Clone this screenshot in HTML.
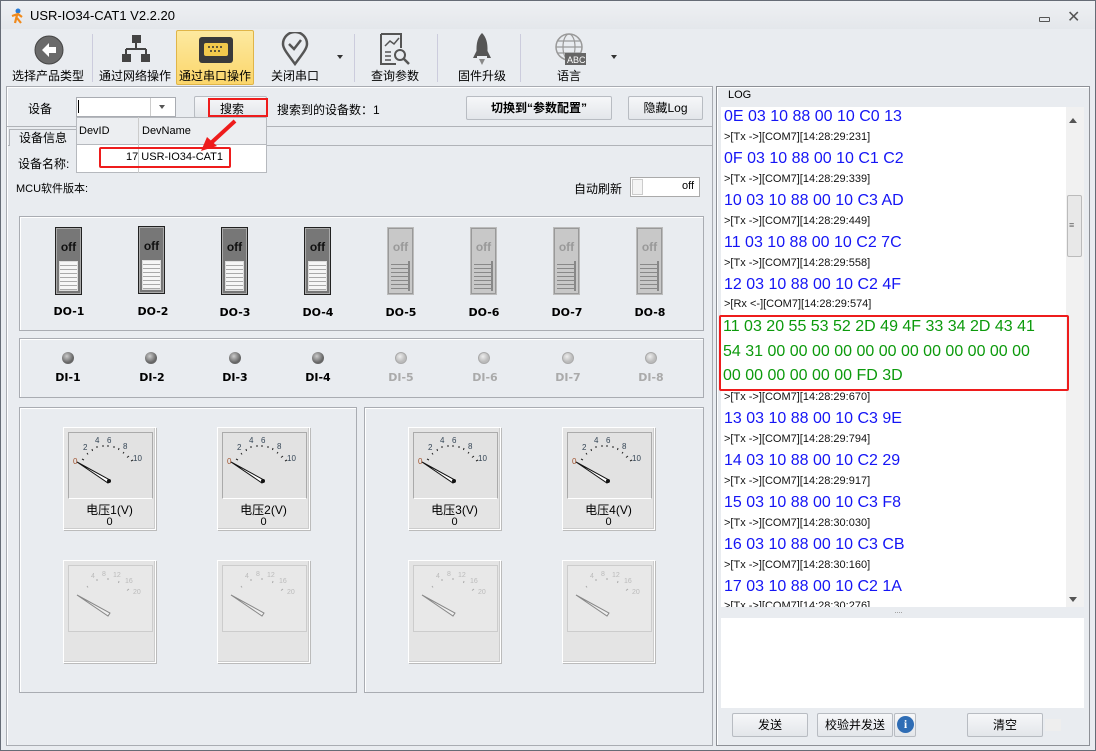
<!DOCTYPE html>
<html><head><meta charset="utf-8">
<style>
*{margin:0;padding:0;box-sizing:border-box}
body{width:1096px;height:751px;background:#e9ecf0;font-family:"Liberation Sans","Noto Sans CJK SC",sans-serif;font-size:12px;color:#000;position:relative;overflow:hidden}
.a{position:absolute}
.win{left:0;top:0;width:1096px;height:751px;border:1px solid #666c76}
.tb{font-size:12px;text-align:center;width:80px}
.btn{position:absolute;background:linear-gradient(#f6f7f9,#e3e6ea);border:1px solid #b8bcc2;border-radius:2px;text-align:center;font-size:12px}
.box{position:absolute;border:1px solid #a9acb2;box-shadow:inset 1px 1px 0 #fff}
.sw{position:absolute;width:27px;height:68px;border:1px solid #222;background:#777;box-shadow:inset 0 0 0 1px #aaa}
.sw b{position:absolute;top:12px;left:0;width:25px;text-align:center;font-size:12px;font-weight:bold;color:#111}
.sw i{position:absolute;left:3px;bottom:3px;width:19px;height:30px;background:repeating-linear-gradient(#f6f6f6 0 3px,#aaa 3px 4px);border:1px solid #ddd}
.sw.d{border:1px solid #bbb;background:#c8c8c8;box-shadow:inset 0 0 0 1px #999}
.sw.d b{color:#999}
.sw.d i{background:repeating-linear-gradient(#c8c8c8 0 3px,#888 3px 4px);border:none;border-right:2px solid #888}
.lbl{position:absolute;width:60px;text-align:center;font-weight:bold;font-family:"DejaVu Sans",sans-serif;font-size:11px}
.led{position:absolute;width:12px;height:12px;border-radius:50%;background:radial-gradient(circle at 40% 35%,#ccc,#666 60%)}
.led.d{background:radial-gradient(circle at 40% 35%,#eee,#bbb 60%);border:1px solid #aaa}
.g{position:absolute;width:93px;height:103px;background:#e4e4e4;border:1px solid #fff;box-shadow:1px 1px 0 #bbb,inset -1px -1px 0 #ccc}
.g .dial{position:absolute;left:4px;top:4px;width:85px;height:67px;background:#e2e2e2;border:1px solid #aaa;border-bottom-color:#fff}
.g .t{position:absolute;top:73px;width:100%;text-align:center;font-size:12px}
.g .v{position:absolute;top:88px;width:100%;text-align:center;font-size:11px}
.hx{position:absolute;left:724px;font-size:16px;color:#1515f5;white-space:nowrap;top:0}
.sm{position:absolute;left:724px;font-size:11px;color:#111;white-space:nowrap}
.gr{position:absolute;left:723px;font-size:16px;color:#0c9a0c;white-space:nowrap}
</style></head><body>
<div class="a win"></div>
<div class="a" style="left:1px;top:1px;width:1094px;height:28px;background:linear-gradient(#eef0f3,#e4e7eb)"></div>
<svg class="a" style="left:9px;top:8px" width="16" height="16"><circle cx="9" cy="3" r="2.5" fill="#2a7bd4"/><path d="M3 8 L9 6 L13 9 M8 7 L6 15 M8 10 L12 15" stroke="#f08a1c" stroke-width="2.2" fill="none"/></svg>
<div class="a" style="left:30px;top:8px;font-size:13px">USR-IO34-CAT1 V2.2.20</div>
<div class="a" style="left:1039px;top:17px;width:11px;height:5px;border:1px solid #555;border-radius:1px"></div>
<div class="a" style="left:1067px;top:7px;font-size:16px;color:#555">✕</div>
<div class="a" style="left:176px;top:30px;width:78px;height:55px;background:linear-gradient(#fde9a0,#fbd66b);border:1px solid #e0b548;border-radius:2px"></div>
<svg class="a" style="left:33px;top:34px" width="32" height="32"><circle cx="16" cy="16" r="14" fill="#6a6a6a" stroke="#444"/><path d="M9 16 L16 9 V13 H23 V19 H16 V23 Z" fill="#fff"/></svg>
<svg class="a" style="left:120px;top:34px" width="32" height="30"><rect x="12" y="1" width="9" height="8" fill="#444"/><path d="M16 9 V15 M6 15 H26 M6 15 V20 M26 15 V20" stroke="#444" stroke-width="2"/><rect x="2" y="20" width="9" height="8" fill="#444"/><rect x="21" y="20" width="9" height="8" fill="#444"/></svg>
<svg class="a" style="left:198px;top:36px" width="36" height="28"><rect x="1" y="1" width="34" height="26" rx="3" fill="#3a3a3a"/><rect x="6" y="7" width="24" height="13" rx="2" fill="#f2c94c"/><g fill="#333"><circle cx="11" cy="11" r="1"/><circle cx="15" cy="11" r="1"/><circle cx="19" cy="11" r="1"/><circle cx="23" cy="11" r="1"/><circle cx="13" cy="15" r="1"/><circle cx="17" cy="15" r="1"/><circle cx="21" cy="15" r="1"/></g></svg>
<svg class="a" style="left:280px;top:32px" width="30" height="34"><path d="M15 32 C6 20 3 16 3 12 A12 12 0 0 1 27 12 C27 16 24 20 15 32Z" fill="none" stroke="#555" stroke-width="2.5"/><path d="M9 12 L14 17 L21 8" stroke="#555" stroke-width="2.5" fill="none"/></svg>
<div class="a" style="left:337px;top:55px;border:3px solid transparent;border-top:4px solid #333"></div>
<svg class="a" style="left:378px;top:32px" width="34" height="34"><path d="M3 2 H23 V16 M3 2 V32 H18" stroke="#555" stroke-width="2" fill="none"/><path d="M7 14 L12 9 L16 12 L21 6" stroke="#555" stroke-width="1.5" fill="none"/><path d="M7 20H13M7 24H13M7 28H13" stroke="#555" stroke-width="1.5"/><circle cx="22" cy="23" r="5" fill="none" stroke="#555" stroke-width="2"/><path d="M26 27 L31 32" stroke="#555" stroke-width="2.5"/></svg>
<svg class="a" style="left:470px;top:32px" width="24" height="34"><path d="M12 1 C18 7 18 16 17 24 H7 C6 16 6 7 12 1Z" fill="#555"/><path d="M7 18 L3 26 H7Z M17 18 L21 26 H17Z" fill="#555"/><path d="M9 27 L12 33 L15 27Z" fill="#888"/></svg>
<svg class="a" style="left:553px;top:32px" width="34" height="34"><circle cx="16" cy="15" r="13" fill="none" stroke="#999" stroke-width="1.5"/><ellipse cx="16" cy="15" rx="6" ry="13" fill="none" stroke="#999" stroke-width="1.2"/><path d="M3 15H29M5 9H27M5 21H27" stroke="#999" stroke-width="1.2"/><rect x="12" y="21" width="21" height="12" fill="#666"/><text x="14" y="31" font-size="9" fill="#fff" font-family="Liberation Sans">ABC</text></svg>
<div class="a" style="left:611px;top:55px;border:3px solid transparent;border-top:4px solid #333"></div>
<div class="a tb" style="left:8px;top:67px">选择产品类型</div>
<div class="a tb" style="left:95px;top:67px">通过网络操作</div>
<div class="a tb" style="left:175px;top:67px">通过串口操作</div>
<div class="a tb" style="left:255px;top:67px">关闭串口</div>
<div class="a tb" style="left:355px;top:67px">查询参数</div>
<div class="a tb" style="left:442px;top:67px">固件升级</div>
<div class="a tb" style="left:529px;top:67px">语言</div>
<div class="a" style="left:92px;top:34px;width:1px;height:48px;background:#ccd"></div>
<div class="a" style="left:354px;top:34px;width:1px;height:48px;background:#ccd"></div>
<div class="a" style="left:437px;top:34px;width:1px;height:48px;background:#ccd"></div>
<div class="a" style="left:520px;top:34px;width:1px;height:48px;background:#ccd"></div>
<div class="box" style="left:6px;top:86px;width:707px;height:660px"></div>
<div class="a" style="left:7px;top:126px;width:705px;height:1px;background:#b0b3b8"></div>
<div class="a" style="left:28px;top:100px;font-size:12px">设备</div>
<div class="a" style="left:76px;top:97px;width:100px;height:20px;background:#fff;border:1px solid #a9acb2"></div>
<div class="a" style="left:78px;top:100px;width:1px;height:13px;background:#000"></div>
<div class="a" style="left:150px;top:98px;width:1px;height:18px;background:#ccc"></div>
<div class="a" style="left:159px;top:105px;border:3px solid transparent;border-top:4px solid #555"></div>
<div class="btn" style="left:194px;top:96px;width:73px;height:22px"></div>
<div class="a" style="left:208px;top:98px;width:60px;height:19px;border:2px solid #ee1c1c"></div>
<div class="a" style="left:220px;top:100px">搜索</div>
<div class="a" style="left:277px;top:101px">搜索到的设备数：1</div>
<div class="btn" style="left:466px;top:96px;width:146px;height:24px;line-height:22px;font-weight:bold">切换到“参数配置”</div>
<div class="btn" style="left:628px;top:96px;width:75px;height:24px;line-height:22px">隐藏Log</div>
<div class="a" style="left:8px;top:128px;width:704px;height:18px;border-bottom:1px solid #b0b3b8"></div>
<div class="a" style="left:9px;top:129px;width:68px;height:17px;border:1px solid #b0b3b8;border-bottom:none;background:#e9ecf0;text-align:center;line-height:16px">设备信息</div>
<div class="a" style="left:18px;top:155px">设备名称:</div>
<div class="a" style="left:16px;top:180px;font-size:11px">MCU软件版本:</div>
<div class="a" style="left:574px;top:180px">自动刷新</div>
<div class="a" style="left:630px;top:177px;width:70px;height:20px;background:#fff;border:1px solid #aaa"></div>
<div class="a" style="left:632px;top:179px;width:11px;height:16px;border:1px solid #ccc;background:#f4f4f4"></div>
<div class="a" style="left:682px;top:180px;font-size:11px">off</div>
<!-- dropdown -->
<div class="a" style="left:76px;top:117px;width:191px;height:56px;background:#fff;border:1px solid #b6b9be"></div>
<div class="a" style="left:76px;top:117px;width:191px;height:28px;background:#eceef1;border:1px solid #b6b9be"></div>
<div class="a" style="left:138px;top:117px;width:1px;height:56px;background:#ccc"></div>
<div class="a" style="left:79px;top:125px;font-size:11px">DevID</div>
<div class="a" style="left:142px;top:125px;font-size:11px">DevName</div>
<div class="a" style="left:99px;top:147px;width:132px;height:21px;border:2px solid #ee1c1c;border-radius:2px"></div>
<div class="a" style="left:126px;top:151px;font-size:11px">17 USR-IO34-CAT1</div>
<svg class="a" style="left:195px;top:117px" width="50" height="40"><path d="M40 4 L16 26" stroke="#ee1c1c" stroke-width="4"/><path d="M6 34 L12 20 L22 29Z" fill="#ee1c1c"/></svg>
<div class="box" style="left:19px;top:216px;width:685px;height:115px"></div>
<div class="sw" style="left:55px;top:227px"><b>off</b><i></i></div>
<div class="sw" style="left:138px;top:226px"><b>off</b><i></i></div>
<div class="sw" style="left:221px;top:227px"><b>off</b><i></i></div>
<div class="sw" style="left:304px;top:227px"><b>off</b><i></i></div>
<div class="sw d" style="left:387px;top:227px"><b>off</b><i></i></div>
<div class="sw d" style="left:470px;top:227px"><b>off</b><i></i></div>
<div class="sw d" style="left:553px;top:227px"><b>off</b><i></i></div>
<div class="sw d" style="left:636px;top:227px"><b>off</b><i></i></div>
<div class="lbl" style="left:39px;top:305px">DO-1</div>
<div class="lbl" style="left:123px;top:305px">DO-2</div>
<div class="lbl" style="left:205px;top:306px">DO-3</div>
<div class="lbl" style="left:288px;top:306px">DO-4</div>
<div class="lbl" style="left:371px;top:306px">DO-5</div>
<div class="lbl" style="left:454px;top:306px">DO-6</div>
<div class="lbl" style="left:537px;top:306px">DO-7</div>
<div class="lbl" style="left:620px;top:306px">DO-8</div>
<div class="box" style="left:19px;top:338px;width:685px;height:60px"></div>
<div class="led" style="left:62px;top:352px"></div>
<div class="led" style="left:145px;top:352px"></div>
<div class="led" style="left:229px;top:352px"></div>
<div class="led" style="left:312px;top:352px"></div>
<div class="led d" style="left:395px;top:352px"></div>
<div class="led d" style="left:478px;top:352px"></div>
<div class="led d" style="left:562px;top:352px"></div>
<div class="led d" style="left:645px;top:352px"></div>
<div class="lbl" style="left:38px;top:371px">DI-1</div>
<div class="lbl" style="left:122px;top:371px">DI-2</div>
<div class="lbl" style="left:205px;top:371px">DI-3</div>
<div class="lbl" style="left:288px;top:371px">DI-4</div>
<div class="lbl" style="left:371px;top:371px;color:#aaa">DI-5</div>
<div class="lbl" style="left:455px;top:371px;color:#aaa">DI-6</div>
<div class="lbl" style="left:538px;top:371px;color:#aaa">DI-7</div>
<div class="lbl" style="left:621px;top:371px;color:#aaa">DI-8</div>
<div class="box" style="left:19px;top:407px;width:338px;height:286px"></div>
<div class="box" style="left:364px;top:407px;width:340px;height:286px"></div>
<svg width="0" height="0" style="position:absolute"><defs>
<g id="dl"><g stroke="#222" stroke-width="1"><path d="M13 26l2 1M18 20l1 1.5M23 16l.5 2M28 13l0 2M34 12v2M39 12v2M45 13v2M50 15l-.5 2M55 19l-1 1.5M60 23l-2 1.5M64 27l-2 1"/></g>
<g font-size="8" font-family="Liberation Sans"><text x="4" y="31" fill="#a0522d">0</text><text x="14" y="17" fill="#345">2</text><text x="26" y="10" fill="#345">4</text><text x="38" y="10" fill="#345">6</text><text x="54" y="16" fill="#345">8</text><text x="64" y="28" fill="#345">10</text></g>
<path d="M8 29 L41 47 L39 50Z" fill="#fff" stroke="#111"/><circle cx="40" cy="48" r="2" fill="#111"/></g>
<g id="dd"><g stroke="#aaa"><path d="M18 20l1 1.5M28 13v2M39 12v2M50 15l-.5 2M60 23l-2 1.5"/></g>
<g font-size="7" fill="#bbb" font-family="Liberation Sans"><text x="22" y="12">4</text><text x="33" y="10">8</text><text x="44" y="11">12</text><text x="56" y="17">16</text><text x="64" y="28">20</text></g>
<path d="M8 29 L41 47 L39 50Z" fill="#eee" stroke="#888"/></g></defs></svg>
<div class="g" style="left:63px;top:427px"><div class="dial"><svg width="85" height="67"><use href="#dl"/></svg></div><div class="t">电压1(V)</div><div class="v">0</div></div>
<div class="g" style="left:217px;top:427px"><div class="dial"><svg width="85" height="67"><use href="#dl"/></svg></div><div class="t">电压2(V)</div><div class="v">0</div></div>
<div class="g" style="left:408px;top:427px"><div class="dial"><svg width="85" height="67"><use href="#dl"/></svg></div><div class="t">电压3(V)</div><div class="v">0</div></div>
<div class="g" style="left:562px;top:427px"><div class="dial"><svg width="85" height="67"><use href="#dl"/></svg></div><div class="t">电压4(V)</div><div class="v">0</div></div>
<div class="g" style="left:63px;top:560px"><div class="dial" style="background:#e8e8e8;border-color:#ccc"><svg width="85" height="67"><use href="#dd"/></svg></div></div>
<div class="g" style="left:217px;top:560px"><div class="dial" style="background:#e8e8e8;border-color:#ccc"><svg width="85" height="67"><use href="#dd"/></svg></div></div>
<div class="g" style="left:408px;top:560px"><div class="dial" style="background:#e8e8e8;border-color:#ccc"><svg width="85" height="67"><use href="#dd"/></svg></div></div>
<div class="g" style="left:562px;top:560px"><div class="dial" style="background:#e8e8e8;border-color:#ccc"><svg width="85" height="67"><use href="#dd"/></svg></div></div>
<div class="box" style="left:716px;top:86px;width:374px;height:660px;border-color:#8d9096"></div>
<div class="a" style="left:728px;top:89px;font-size:11px">LOG</div>
<div class="a" style="left:721px;top:107px;width:363px;height:500px;background:#fff"></div>
<div class="a" style="left:1066px;top:107px;width:18px;height:500px;background:#f1f1f1"></div>
<div class="a" style="left:1067px;top:195px;width:15px;height:62px;background:#e8e8e8;border:1px solid #bbb;border-radius:2px"></div>
<div class="a" style="left:1069px;top:220px;font-size:9px;color:#666">≡</div>
<div class="a" style="left:1069px;top:114px;border:4px solid transparent;border-bottom:5px solid #555"></div>
<div class="a" style="left:1069px;top:597px;border:4px solid transparent;border-top:5px solid #555"></div>
<div class="hx" style="top:108px">0E 03 10 88 00 10 C0 13</div>
<div class="sm" style="top:131px">&gt;[Tx -&gt;][COM7][14:28:29:231]</div>
<div class="hx" style="top:150px">0F 03 10 88 00 10 C1 C2</div>
<div class="sm" style="top:173px">&gt;[Tx -&gt;][COM7][14:28:29:339]</div>
<div class="hx" style="top:192px">10 03 10 88 00 10 C3 AD</div>
<div class="sm" style="top:215px">&gt;[Tx -&gt;][COM7][14:28:29:449]</div>
<div class="hx" style="top:234px">11 03 10 88 00 10 C2 7C</div>
<div class="sm" style="top:257px">&gt;[Tx -&gt;][COM7][14:28:29:558]</div>
<div class="hx" style="top:276px">12 03 10 88 00 10 C2 4F</div>
<div class="sm" style="top:298px">&gt;[Rx &lt;-][COM7][14:28:29:574]</div>
<div class="a" style="left:719px;top:315px;width:350px;height:76px;border:2px solid #ee1c1c;border-radius:2px"></div>
<div class="gr" style="top:318px">11 03 20 55 53 52 2D 49 4F 33 34 2D 43 41</div>
<div class="gr" style="top:343px">54 31 00 00 00 00 00 00 00 00 00 00 00 00</div>
<div class="gr" style="top:367px">00 00 00 00 00 00 FD 3D</div>
<div class="sm" style="top:391px">&gt;[Tx -&gt;][COM7][14:28:29:670]</div>
<div class="hx" style="top:410px">13 03 10 88 00 10 C3 9E</div>
<div class="sm" style="top:433px">&gt;[Tx -&gt;][COM7][14:28:29:794]</div>
<div class="hx" style="top:452px">14 03 10 88 00 10 C2 29</div>
<div class="sm" style="top:475px">&gt;[Tx -&gt;][COM7][14:28:29:917]</div>
<div class="hx" style="top:494px">15 03 10 88 00 10 C3 F8</div>
<div class="sm" style="top:517px">&gt;[Tx -&gt;][COM7][14:28:30:030]</div>
<div class="hx" style="top:536px">16 03 10 88 00 10 C3 CB</div>
<div class="sm" style="top:559px">&gt;[Tx -&gt;][COM7][14:28:30:160]</div>
<div class="hx" style="top:578px">17 03 10 88 00 10 C2 1A</div>
<div class="a" style="left:721px;top:601px;width:345px;height:6px;overflow:hidden"><div class="sm" style="left:3px;top:-1px">&gt;[Tx -&gt;][COM7][14:28:30:276]</div></div>
<div class="a" style="left:894px;top:607px;font-size:9px;color:#999;letter-spacing:-1px">····</div>
<div class="a" style="left:721px;top:618px;width:363px;height:90px;background:#fff"></div>
<div class="btn" style="left:732px;top:713px;width:76px;height:24px;line-height:22px">发送</div>
<div class="btn" style="left:817px;top:713px;width:76px;height:24px;line-height:22px">校验并发送</div>
<div class="btn" style="left:894px;top:713px;width:22px;height:24px"></div>
<div class="a" style="left:897px;top:716px;width:17px;height:17px;border-radius:50%;background:#2f6db5;color:#fff;font-weight:bold;font-size:12px;text-align:center;line-height:17px;font-family:'Liberation Serif',serif">i</div>
<div class="btn" style="left:967px;top:713px;width:76px;height:24px;line-height:22px">清空</div>
<div class="a" style="left:1045px;top:719px;width:16px;height:12px;background:#eee"></div>
</body></html>
